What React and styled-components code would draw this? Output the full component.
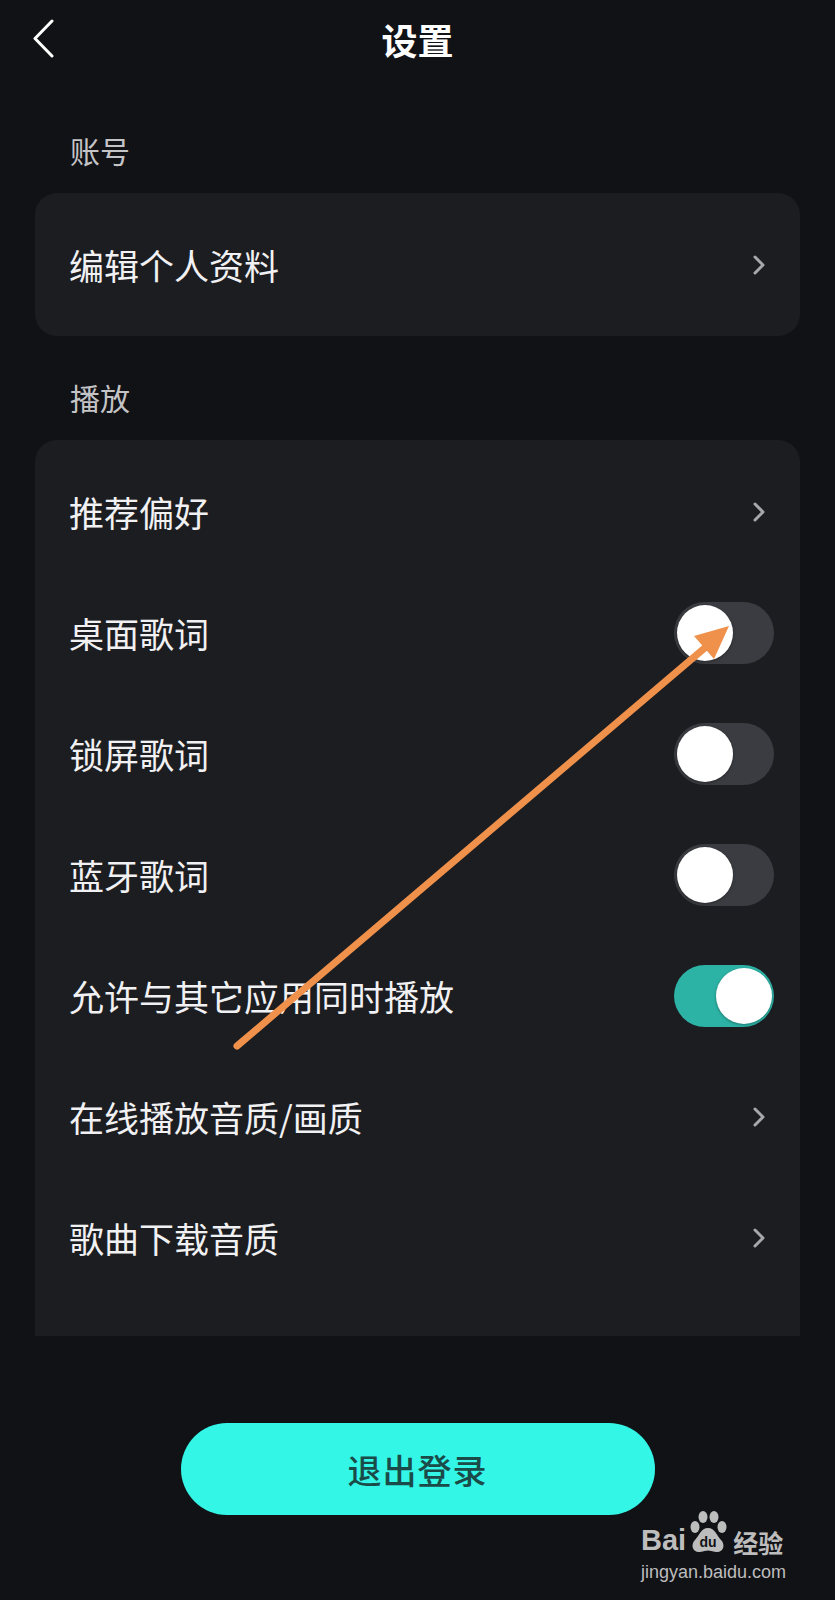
import React from 'react';
import styled, { createGlobalStyle } from 'styled-components';

const GlobalStyle = createGlobalStyle`
	html, body {
		margin: 0;
		padding: 0;
		background: #111216;
	}
	body {
		font-family: "Noto Sans CJK SC", "Noto Sans", sans-serif;
	}
`;

const Page = styled.div`
	position: relative;
	width: 835px;
	height: 1600px;
	background: #111216;
	overflow: hidden;
`;

const Header = styled.header`
	position: relative;
	height: 82px;
	display: flex;
	align-items: center;
	justify-content: center;
`;

const BackButton = styled.button`
	position: absolute;
	left: 28px;
	top: 15px;
	width: 32px;
	height: 48px;
	padding: 0;
	border: none;
	background: none;
	display: flex;
	align-items: center;
	justify-content: center;
`;

const Title = styled.h1`
	margin: 0 0 4px;
	font-size: 36px;
	font-weight: 700;
	color: #ffffff;
	line-height: 1;
`;

const Content = styled.main`
	padding: 48px 35px 0;
`;

const Section = styled.section`
	& + & {
		margin-top: 41px;
	}
`;

const SectionLabel = styled.div`
	height: 40px;
	line-height: 40px;
	margin: 0 0 23px 35px;
	font-size: 30px;
	color: #c4c4c6;
`;

const Card = styled.div`
	background: #1c1d21;
	border-radius: ${p => (p.$open ? '22px 22px 0 0' : '22px')};
	padding: ${p => (p.$open ? '11px 0 38px' : '0')};
`;

const Row = styled.div`
	height: ${p => p.$height || 121}px;
	display: flex;
	align-items: center;
	justify-content: space-between;
	padding: 0 26px 0 34px;
	box-sizing: border-box;
`;

const RowText = styled.span`
	font-size: 35px;
	color: #f1f1f3;
	line-height: 1;
`;

const Chevron = styled.svg`
	width: 14px;
	height: 22px;
	margin-right: 8px;
`;

const Track = styled.div`
	position: relative;
	width: 100px;
	height: 62px;
	border-radius: 31px;
	background: ${p => (p.$on ? '#2cb3a5' : '#3b3c41')};
	flex-shrink: 0;
`;

const Knob = styled.div`
	position: absolute;
	top: 3px;
	left: ${p => (p.$on ? '42px' : '3px')};
	width: 56px;
	height: 56px;
	border-radius: 50%;
	background: #ffffff;
	box-shadow: 0 1px 3px rgba(0, 0, 0, 0.35);
`;

const Footer = styled.div`
	display: flex;
	justify-content: center;
	padding-top: 87px;
`;

const LogoutButton = styled.button`
	width: 474px;
	height: 92px;
	border: none;
	border-radius: 46px;
	background: #33f6e7;
	color: #1b4b48;
	font-family: "Noto Sans CJK SC", sans-serif;
	font-size: 34px;
	font-weight: 500;
	letter-spacing: 1px;
`;

const Overlay = styled.svg`
	position: absolute;
	left: 0;
	top: 0;
	width: 835px;
	height: 1600px;
	pointer-events: none;
`;

const Watermark = styled.div`
	position: absolute;
	left: 641px;
	top: 1510px;
	width: 160px;
	color: #bdbdbd;
	display: flex;
	flex-direction: column;
	align-items: flex-start;
`;

const BrandLine = styled.div`
	display: flex;
	align-items: flex-end;
	height: 44px;
`;

const Bai = styled.span`
	font-family: "Liberation Sans", Arial, sans-serif;
	font-weight: 700;
	font-size: 29px;
	line-height: 1;
	margin-bottom: -1px;
`;

const Jingyan = styled.span`
	font-family: "Noto Sans CJK SC", sans-serif;
	font-weight: 700;
	font-size: 25px;
	line-height: 1;
	margin-left: 3px;
	margin-bottom: -1px;
`;

const Url = styled.span`
	font-family: "Liberation Sans", Arial, sans-serif;
	font-size: 18px;
	line-height: 1;
	margin-top: 9px;
`;

const ChevronRight = () => (
	<Chevron viewBox="0 0 14 22">
		<path d="M3 3 L11 11 L3 19" fill="none" stroke="#a8a8ab" strokeWidth="3" strokeLinecap="round" strokeLinejoin="round" />
	</Chevron>
);

const Toggle = ({ on }) => (
	<Track $on={on}>
		<Knob $on={on} />
	</Track>
);

const Paw = () => (
	<svg width="44" height="44" viewBox="0 0 44 44">
		<ellipse cx="9" cy="17" rx="4.5" ry="6" fill="#bdbdbd" />
		<ellipse cx="17" cy="7" rx="4.5" ry="6" fill="#bdbdbd" />
		<ellipse cx="28" cy="7" rx="4.5" ry="6" fill="#bdbdbd" />
		<ellipse cx="36" cy="17" rx="4.5" ry="6" fill="#bdbdbd" />
		<path d="M22 18 C15 18 13 26 9 30 C4 35 7 43 14 42 C18 41.5 20 40.5 22 40.5 C24 40.5 26 41.5 30 42 C37 43 40 35 35 30 C31 26 29 18 22 18 Z" fill="#bdbdbd" />
		<text x="22" y="37" textAnchor="middle" fontFamily="Liberation Sans, Arial, sans-serif" fontWeight="700" fontSize="14" fill="#111216">du</text>
	</svg>
);

const playbackRows = [
	{ label: '推荐偏好', type: 'link' },
	{ label: '桌面歌词', type: 'toggle', on: false },
	{ label: '锁屏歌词', type: 'toggle', on: false },
	{ label: '蓝牙歌词', type: 'toggle', on: false },
	{ label: '允许与其它应用同时播放', type: 'toggle', on: true },
	{ label: '在线播放音质/画质', type: 'link' },
	{ label: '歌曲下载音质', type: 'link' },
];

const App = () => (
	<Page>
		<GlobalStyle />
		<Header>
			<BackButton>
				<svg width="24" height="40" viewBox="0 0 24 40">
					<path d="M20 2 L3 19.5 L20 37" fill="none" stroke="#ffffff" strokeWidth="3" strokeLinecap="round" strokeLinejoin="round" />
				</svg>
			</BackButton>
			<Title>设置</Title>
		</Header>

		<Content>
			<Section>
				<SectionLabel>账号</SectionLabel>
				<Card>
					<Row $height={143}>
						<RowText>编辑个人资料</RowText>
						<ChevronRight />
					</Row>
				</Card>
			</Section>

			<Section>
				<SectionLabel>播放</SectionLabel>
				<Card $open>
					{playbackRows.map(row => (
						<Row key={row.label}>
							<RowText>{row.label}</RowText>
							{row.type === 'toggle' ? <Toggle on={row.on} /> : <ChevronRight />}
						</Row>
					))}
				</Card>
			</Section>
		</Content>

		<Footer>
			<LogoutButton>退出登录</LogoutButton>
		</Footer>

		{/* annotation arrow drawn over the screenshot */}
		<Overlay viewBox="0 0 835 1600">
			<line x1="237" y1="1046" x2="707" y2="646" stroke="#ef914b" strokeWidth="7" strokeLinecap="round" />
			<polygon points="729,626 714,659 694,636" fill="#ef914b" />
		</Overlay>

		<Watermark>
			<BrandLine>
				<Bai>Bai</Bai>
				<Paw />
				<Jingyan>经验</Jingyan>
			</BrandLine>
			<Url>jingyan.baidu.com</Url>
		</Watermark>
	</Page>
);

export default App;
